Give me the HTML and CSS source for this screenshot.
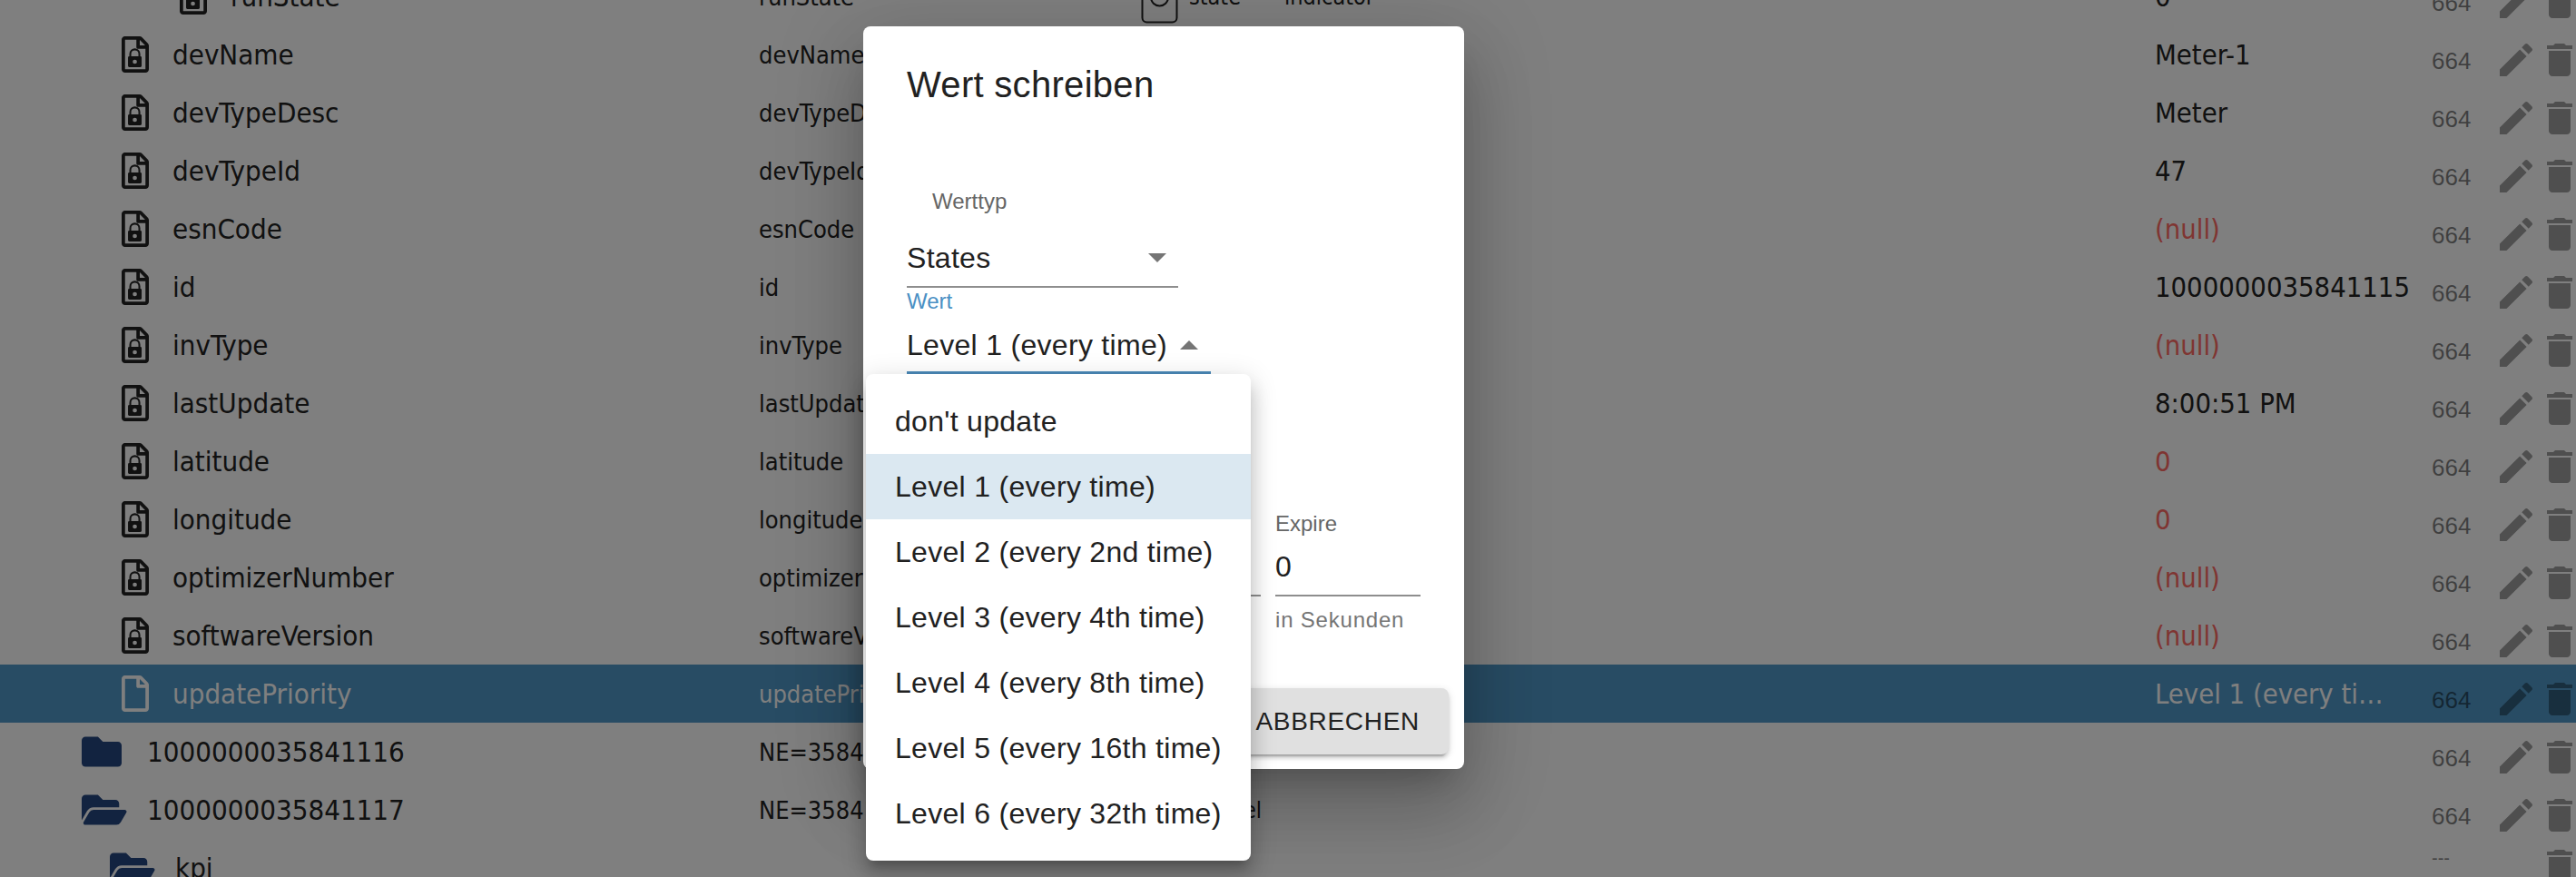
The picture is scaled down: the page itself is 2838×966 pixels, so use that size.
FILE: index.html

```html
<!DOCTYPE html>
<html lang="de">
<head>
  <meta charset="UTF-8" />
  <meta name="viewport" content="width=device-width, initial-scale=1.0" />
  <title>Objekte</title>
  <link rel="stylesheet" href="styles.css">
</head>
<body>
  <svg class="sprite" aria-hidden="true">
    <symbol id="i-file" viewBox="0 0 384 512">
      <path d="M369.9 97.9L286 14C277 5 264.8-.1 252.1-.1H48C21.5 0 0 21.5 0 48v416c0 26.5 21.5 48 48 48h288c26.5 0 48-21.5 48-48V131.9c0-12.7-5.1-25-14.1-34zM332.1 128H256V51.9l76.1 76.1zM48 464V48h160v104c0 13.3 10.7 24 24 24h104v288H48z"/>
    </symbol>
    <symbol id="i-file-lock" viewBox="0 0 384 512">
      <path d="M369.9 97.9L286 14C277 5 264.8-.1 252.1-.1H48C21.5 0 0 21.5 0 48v416c0 26.5 21.5 48 48 48h288c26.5 0 48-21.5 48-48V131.9c0-12.7-5.1-25-14.1-34zM332.1 128H256V51.9l76.1 76.1zM48 464V48h160v104c0 13.3 10.7 24 24 24h104v288H48z"/>
      <path d="M122 290v-42a64 64 0 0 1 128 0v42" fill="none" stroke="currentColor" stroke-width="26"/>
      <path fill-rule="evenodd" d="M108 282h156a18 18 0 0 1 18 18v117a18 18 0 0 1-18 18H108a18 18 0 0 1-18-18V300a18 18 0 0 1 18-18zM186 328a30 30 0 1 0 0 60 30 30 0 1 0 0-60z"/>
    </symbol>
    <symbol id="i-folder" viewBox="0 0 512 512" preserveAspectRatio="xMinYMid meet">
      <path d="M464 128H272l-64-64H48C21.49 64 0 85.49 0 112v288c0 26.51 21.49 48 48 48h416c26.51 0 48-21.49 48-48V176c0-26.51-21.49-48-48-48z"/>
    </symbol>
    <symbol id="i-folder-open" viewBox="0 0 576 512" preserveAspectRatio="xMinYMid meet">
      <path d="M572.694 292.093L500.27 416.248A63.997 63.997 0 0 1 444.989 448H45.025c-18.523 0-30.064-20.093-20.731-36.093l72.424-124.155A64 64 0 0 1 152 256h399.964c18.523 0 30.064 20.093 20.73 36.093zM152 224h328v-48c0-26.51-21.49-48-48-48H272l-64-64H48C21.49 64 0 85.49 0 112v278.046l69.077-118.418C86.214 242.25 117.989 224 152 224z"/>
    </symbol>
    <symbol id="i-edit" viewBox="0 0 24 24">
      <path d="M3 17.25V21h3.75L17.81 9.94l-3.75-3.75L3 17.25zM20.71 7.04c.39-.39.39-1.02 0-1.41l-2.34-2.34c-.39-.39-1.02-.39-1.41 0l-1.83 1.83 3.75 3.75 1.83-1.83z"/>
    </symbol>
    <symbol id="i-delete" viewBox="0 0 24 24">
      <path d="M6 19c0 1.1.9 2 2 2h8c1.1 0 2-.9 2-2V7H6v12zM19 4h-3.5l-1-1h-5l-1 1H5v2h14V4z"/>
    </symbol>
    <symbol id="i-type" viewBox="0 0 41 60">
      <rect x="1.5" y="1.5" width="38" height="57" rx="5" fill="none" stroke="currentColor" stroke-width="2"/>
      <path d="M11 31a9.5 9.5 0 0 0 19 0" fill="none" stroke="currentColor" stroke-width="2"/>
    </symbol>
  </svg>

  <div class="tree">
    <div class="row">
      <div class="name level-3"><svg class="ico-file"><use href="#i-file-lock"/></svg><span>runState</span></div>
      <div class="id">runState</div>
      <div class="type"><svg class="ico-type"><use href="#i-type"/></svg><span>state</span></div>
      <div class="role">indicator</div>
      <div class="val">0</div>
      <div class="size">664</div>
      <div class="acts"><svg><use href="#i-edit"/></svg><svg><use href="#i-delete"/></svg></div>
    </div>
    <div class="row">
      <div class="name level-2"><svg class="ico-file"><use href="#i-file-lock"/></svg><span>devName</span></div>
      <div class="id">devName</div><div class="type"></div><div class="role"></div>
      <div class="val">Meter-1</div>
      <div class="size">664</div>
      <div class="acts"><svg><use href="#i-edit"/></svg><svg><use href="#i-delete"/></svg></div>
    </div>
    <div class="row">
      <div class="name level-2"><svg class="ico-file"><use href="#i-file-lock"/></svg><span>devTypeDesc</span></div>
      <div class="id">devTypeDesc</div><div class="type"></div><div class="role"></div>
      <div class="val">Meter</div>
      <div class="size">664</div>
      <div class="acts"><svg><use href="#i-edit"/></svg><svg><use href="#i-delete"/></svg></div>
    </div>
    <div class="row">
      <div class="name level-2"><svg class="ico-file"><use href="#i-file-lock"/></svg><span>devTypeId</span></div>
      <div class="id">devTypeId</div><div class="type"></div><div class="role"></div>
      <div class="val">47</div>
      <div class="size">664</div>
      <div class="acts"><svg><use href="#i-edit"/></svg><svg><use href="#i-delete"/></svg></div>
    </div>
    <div class="row">
      <div class="name level-2"><svg class="ico-file"><use href="#i-file-lock"/></svg><span>esnCode</span></div>
      <div class="id">esnCode</div><div class="type"></div><div class="role"></div>
      <div class="val null">(null)</div>
      <div class="size">664</div>
      <div class="acts"><svg><use href="#i-edit"/></svg><svg><use href="#i-delete"/></svg></div>
    </div>
    <div class="row">
      <div class="name level-2"><svg class="ico-file"><use href="#i-file-lock"/></svg><span>id</span></div>
      <div class="id">id</div><div class="type"></div><div class="role"></div>
      <div class="val">1000000035841115</div>
      <div class="size">664</div>
      <div class="acts"><svg><use href="#i-edit"/></svg><svg><use href="#i-delete"/></svg></div>
    </div>
    <div class="row">
      <div class="name level-2"><svg class="ico-file"><use href="#i-file-lock"/></svg><span>invType</span></div>
      <div class="id">invType</div><div class="type"></div><div class="role"></div>
      <div class="val null">(null)</div>
      <div class="size">664</div>
      <div class="acts"><svg><use href="#i-edit"/></svg><svg><use href="#i-delete"/></svg></div>
    </div>
    <div class="row">
      <div class="name level-2"><svg class="ico-file"><use href="#i-file-lock"/></svg><span>lastUpdate</span></div>
      <div class="id">lastUpdate</div><div class="type"></div><div class="role"></div>
      <div class="val">8:00:51 PM</div>
      <div class="size">664</div>
      <div class="acts"><svg><use href="#i-edit"/></svg><svg><use href="#i-delete"/></svg></div>
    </div>
    <div class="row">
      <div class="name level-2"><svg class="ico-file"><use href="#i-file-lock"/></svg><span>latitude</span></div>
      <div class="id">latitude</div><div class="type"></div><div class="role"></div>
      <div class="val null">0</div>
      <div class="size">664</div>
      <div class="acts"><svg><use href="#i-edit"/></svg><svg><use href="#i-delete"/></svg></div>
    </div>
    <div class="row">
      <div class="name level-2"><svg class="ico-file"><use href="#i-file-lock"/></svg><span>longitude</span></div>
      <div class="id">longitude</div><div class="type"></div><div class="role"></div>
      <div class="val null">0</div>
      <div class="size">664</div>
      <div class="acts"><svg><use href="#i-edit"/></svg><svg><use href="#i-delete"/></svg></div>
    </div>
    <div class="row">
      <div class="name level-2"><svg class="ico-file"><use href="#i-file-lock"/></svg><span>optimizerNumber</span></div>
      <div class="id">optimizerNumber</div><div class="type"></div><div class="role"></div>
      <div class="val null">(null)</div>
      <div class="size">664</div>
      <div class="acts"><svg><use href="#i-edit"/></svg><svg><use href="#i-delete"/></svg></div>
    </div>
    <div class="row">
      <div class="name level-2"><svg class="ico-file"><use href="#i-file-lock"/></svg><span>softwareVersion</span></div>
      <div class="id">softwareVersion</div><div class="type"></div><div class="role"></div>
      <div class="val null">(null)</div>
      <div class="size">664</div>
      <div class="acts"><svg><use href="#i-edit"/></svg><svg><use href="#i-delete"/></svg></div>
    </div>
    <div class="row selected">
      <div class="name level-2"><svg class="ico-file"><use href="#i-file"/></svg><span>updatePriority</span></div>
      <div class="id">updatePriority</div><div class="type"></div><div class="role"></div>
      <div class="val">Level 1 (every time)</div>
      <div class="size">664</div>
      <div class="acts"><svg><use href="#i-edit"/></svg><svg><use href="#i-delete"/></svg></div>
    </div>
    <div class="row">
      <div class="name level-1"><svg class="ico-folder"><use href="#i-folder"/></svg><span>1000000035841116</span></div>
      <div class="id">NE=35841116</div><div class="type"></div><div class="role"></div>
      <div class="val"></div>
      <div class="size">664</div>
      <div class="acts"><svg><use href="#i-edit"/></svg><svg><use href="#i-delete"/></svg></div>
    </div>
    <div class="row">
      <div class="name level-1"><svg class="ico-folder"><use href="#i-folder-open"/></svg><span>1000000035841117</span></div>
      <div class="id">NE=35841117</div>
      <div class="type type-channel"><svg class="ico-type"><use href="#i-type"/></svg><span>channel</span></div>
      <div class="role"></div>
      <div class="val"></div>
      <div class="size">664</div>
      <div class="acts"><svg><use href="#i-edit"/></svg><svg><use href="#i-delete"/></svg></div>
    </div>
    <div class="row row-last">
      <div class="name level-kpi"><svg class="ico-folder"><use href="#i-folder-open"/></svg><span>kpi</span></div>
      <div class="id"></div><div class="type"></div><div class="role"></div>
      <div class="val"></div>
      <div class="size">---</div>
      <div class="acts"><svg></svg><svg><use href="#i-delete"/></svg></div>
    </div>
  </div>

  <div class="backdrop"></div>

  <div class="dialog">
    <h2 class="dialog-title">Wert schreiben</h2>

    <div class="field field-type">
      <div class="label label-inset">Werttyp</div>
      <div class="select">
        <span>States</span>
        <i class="arrow"></i>
      </div>
    </div>

    <div class="field field-value">
      <div class="label label-focus">Wert</div>
      <div class="select select-open">
        <span>Level 1 (every time)</span>
        <i class="arrow arrow-up"></i>
      </div>
    </div>

    <div class="field-row">
      <div class="field-wide">
        <div class="label">&nbsp;</div>
        <div class="input">&nbsp;</div>
      </div>
      <div class="field-expire">
        <div class="label">Expire</div>
        <div class="input">0</div>
        <div class="helper">in Sekunden</div>
      </div>
    </div>

    <div class="dialog-actions">
      <button class="btn">ABBRECHEN</button>
    </div>
  </div>

  <ul class="menu">
    <li>don't update</li>
    <li class="active">Level 1 (every time)</li>
    <li>Level 2 (every 2nd time)</li>
    <li>Level 3 (every 4th time)</li>
    <li>Level 4 (every 8th time)</li>
    <li>Level 5 (every 16th time)</li>
    <li>Level 6 (every 32th time)</li>
  </ul>
</body>
</html>
```

FILE: styles.css

```css
html, body {
  height: 966px;
}
body {
  margin: 0;
  background: #fff;
  overflow: hidden;
  position: relative;
  font-family: "Liberation Sans", Arial, sans-serif;
  color: #212121;
}
.sprite {
  display: none;
}

/* tree table */
.tree {
  margin-top: -36px;
  font-family: "DejaVu Sans Condensed", "Open Sans", sans-serif;
  color: #222;
}
.row {
  display: grid;
  grid-template-columns: 836px 421px 158px 959px 305px 69px 96px;
  height: 64px;
  align-items: center;
  width: 2844px;
}
.name {
  display: flex;
  align-items: center;
  font-size: 31px;
}
.level-1 { padding-left: 90px; }
.level-2 { padding-left: 134px; }
.level-3 { padding-left: 198px; }
.level-kpi { padding-left: 121px; }
.ico-file {
  width: 30px;
  height: 40px;
  margin-right: 26px;
  fill: currentColor;
  color: #222;
}
.ico-folder {
  width: 50px;
  height: 44px;
  margin-right: 22px;
  fill: #244680;
}
.id {
  font-size: 27px;
  white-space: nowrap;
}
.type {
  display: flex;
  align-items: center;
  gap: 12px;
  font-size: 25px;
  white-space: nowrap;
}
.type-channel {
  gap: 3px;
}
.ico-type {
  width: 41px;
  height: 60px;
  color: #222;
}
.role {
  font-size: 25px;
}
.val {
  font-size: 30.7px;
  white-space: nowrap;
  overflow: hidden;
  text-overflow: ellipsis;
  padding-right: 20px;
}
.null {
  color: #ff6a64;
}
.size {
  font-family: "Liberation Sans", Arial, sans-serif;
  font-size: 26px;
  padding-top: 14px;
  color: rgba(0, 0, 0, 0.5);
}
.acts {
  display: flex;
}
.acts svg {
  width: 48px;
  height: 48px;
  margin-top: 12px;
  fill: rgba(0, 0, 0, 0.38);
}
.selected {
  background: #5098c8;
}
.selected .name,
.selected .id,
.selected .val,
.selected .ico-file {
  color: #fff;
}
.selected .val {
  padding-right: 43px;
}
.row-last .size {
  font-size: 20px;
  padding-top: 0;
  margin-top: -22px;
}
.row-last .acts svg {
  margin-top: -4px;
}

/* dialog */
.backdrop {
  position: absolute;
  inset: 0;
  background: rgba(0, 0, 0, 0.5);
}
.dialog {
  position: absolute;
  left: 951px;
  top: 29px;
  width: 662px;
  background: #fff;
  border-radius: 8px;
  box-shadow: 0 22px 30px -14px rgba(0, 0, 0, 0.2), 0 48px 76px 6px rgba(0, 0, 0, 0.14), 0 18px 92px 16px rgba(0, 0, 0, 0.12);
}
.dialog-title {
  margin: 0;
  padding: 32px 48px 0;
  font-size: 40px;
  font-weight: normal;
  letter-spacing: 0.3px;
  line-height: 64px;
}
.field {
  margin-left: 48px;
}
.label {
  font-size: 24px;
  line-height: 24px;
  color: #666;
}
.label-inset {
  padding-left: 28px;
}
.label-focus {
  color: #4a90c4;
}
.select {
  display: flex;
  justify-content: space-between;
  align-items: center;
  font-size: 32px;
  letter-spacing: 0.3px;
  line-height: 36px;
}
.arrow {
  width: 0;
  height: 0;
  border-left: 10px solid transparent;
  border-right: 10px solid transparent;
  border-top: 10px solid #757575;
}
.arrow-up {
  border-top: 0;
  border-bottom: 10px solid #757575;
}
.field-type {
  width: 299px;
  margin-top: 85px;
}
.field-type .select {
  margin-top: 32px;
  padding: 0 13px 13px 0;
  border-bottom: 2px solid #8e8e8e;
}
.field-value {
  width: 335px;
  margin-top: 3px;
}
.field-value .select {
  margin-top: 18px;
  padding: 0 14px 11px 0;
  border-bottom: 3px solid #4b8ab8;
}
.field-row {
  display: flex;
  gap: 16px;
  margin: 153px 48px 0;
}
.field-wide {
  width: 390px;
}
.field-expire {
  width: 160px;
}
.input {
  margin-top: 17px;
  font-size: 32px;
  line-height: 36px;
  padding-bottom: 13px;
  border-bottom: 2px solid #8e8e8e;
}
.helper {
  margin-top: 14px;
  font-size: 24px;
  line-height: 24px;
  letter-spacing: 0.8px;
  color: #757575;
}
.dialog-actions {
  display: flex;
  justify-content: flex-end;
  padding: 63px 17px 16px;
}
.btn {
  height: 73px;
  padding: 0 32px;
  border: none;
  border-radius: 8px;
  background: #e0e0e0;
  color: #212121;
  font-family: inherit;
  font-size: 28px;
  letter-spacing: 0.7px;
  box-shadow: 0 6px 2px -4px rgba(0, 0, 0, 0.2), 0 4px 4px 0 rgba(0, 0, 0, 0.14), 0 2px 10px 0 rgba(0, 0, 0, 0.12);
}

/* dropdown */
.menu {
  position: absolute;
  left: 954px;
  top: 412px;
  width: 424px;
  margin: 0;
  padding: 16px 0;
  list-style: none;
  background: #fff;
  border-radius: 8px;
  box-shadow: 0 10px 10px -6px rgba(0, 0, 0, 0.2), 0 16px 20px 2px rgba(0, 0, 0, 0.14), 0 6px 28px 4px rgba(0, 0, 0, 0.12);
}
.menu li {
  height: 72px;
  line-height: 72px;
  padding-left: 32px;
  font-size: 32px;
  letter-spacing: 0.3px;
  white-space: nowrap;
}
.menu .active {
  background: #dbe8f1;
}
```
